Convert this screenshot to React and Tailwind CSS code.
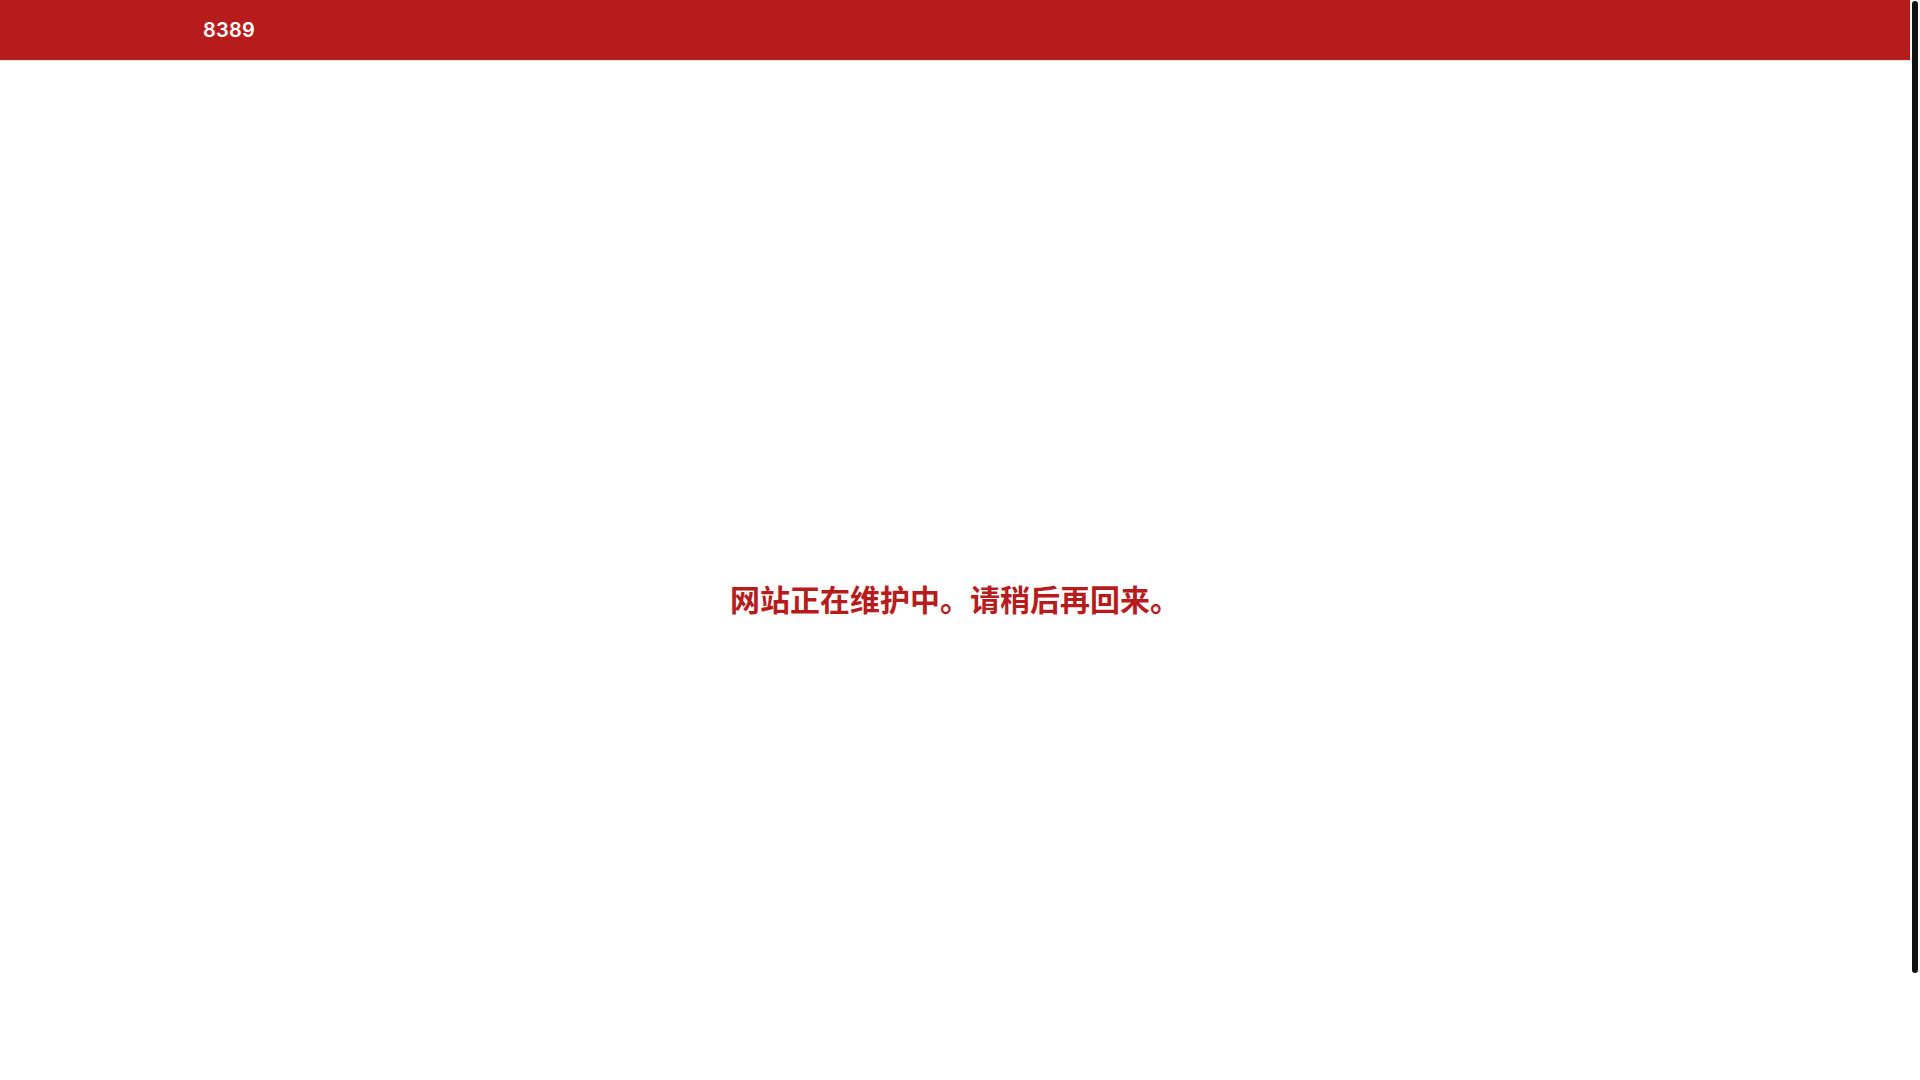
import React from "react";

const App = () => {
  return (
    <div className="h-screen w-full overflow-hidden bg-white flex">
      {/* Page */}
      <div className="flex-1 min-w-0 flex flex-col">
        {/* Header */}
        <header className="h-[61px] shrink-0 bg-[#b71c1c] border-b border-[#e2e2e2] flex items-center pl-[203px]">
          <span className="text-[20px] font-semibold text-white font-['Inter','Noto_Sans',sans-serif] tracking-[0.2px]">
            8389
          </span>
        </header>

        {/* Maintenance message */}
        <main className="flex justify-center pt-[519px]">
          <h1 className="text-[30px] leading-[36px] font-bold text-[#b71c1c] font-['Noto_Sans_CJK_SC','Noto_Sans',sans-serif]">
            网站正在维护中。请稍后再回来。
          </h1>
        </main>
      </div>

      {/* Scrollbar gutter */}
      <div className="w-[10px] shrink-0 bg-white pt-px pl-[2px]">
        <div className="h-[972px] w-[6px] rounded-full bg-[#111111]" />
      </div>
    </div>
  );
};

export default App;
